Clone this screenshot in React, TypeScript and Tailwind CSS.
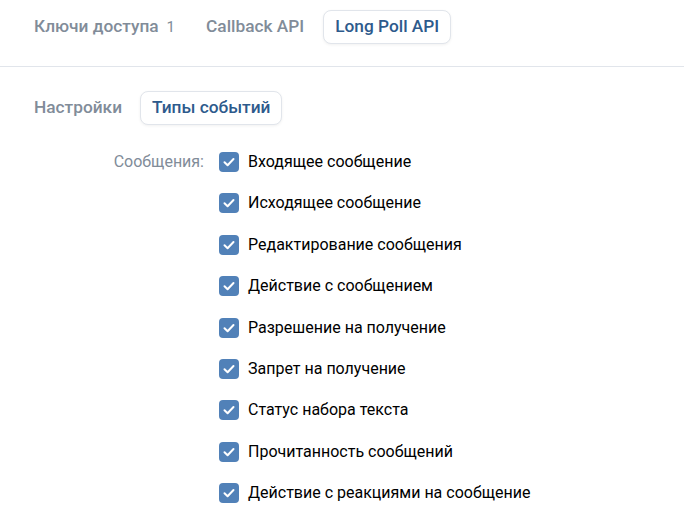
import React from "react";

const items = [
  "Входящее сообщение",
  "Исходящее сообщение",
  "Редактирование сообщения",
  "Действие с сообщением",
  "Разрешение на получение",
  "Запрет на получение",
  "Статус набора текста",
  "Прочитанность сообщений",
  "Действие с реакциями на сообщение",
];

function Check() {
  return (
    <div className="w-[20px] h-[20px] rounded-[4px] bg-[#5181b8] flex items-center justify-center shrink-0">
      <svg width="12" height="10" viewBox="0 0 12 10" fill="none">
        <path d="M1.5 5.2 L4.6 8.2 L10.5 2" stroke="white" strokeWidth="2" strokeLinecap="round" strokeLinejoin="round" />
      </svg>
    </div>
  );
}

export default function App() {
  return (
    <div className="w-[684px] h-[517px] bg-white overflow-hidden font-['Roboto',sans-serif]">
      <div className="flex items-center gap-[7px] pl-[22px] pt-[10px] pb-[22px] border-b border-[#e1e5eb]">
        <div className="h-[34px] px-3 flex items-center text-[17.3px] font-medium text-[#818c99]">
          Ключи доступа<span className="ml-2 text-[15px] font-normal text-[#818c99]">1</span>
        </div>
        <div className="h-[34px] px-3 flex items-center text-[17.3px] font-medium text-[#818c99]">Callback API</div>
        <div className="h-[34px] px-[11px] flex items-center text-[17.3px] font-medium text-[#2d5a8c] bg-white border border-[#e1e5eb] rounded-[8px] shadow-[0_1px_3px_rgba(0,0,0,0.06)]">
          Long Poll API
        </div>
      </div>
      <div className="flex items-center gap-[6px] pl-[22px] pt-[24px]">
        <div className="h-[34px] px-3 flex items-center text-[17.3px] font-medium text-[#818c99]">Настройки</div>
        <div className="h-[34px] px-[11px] flex items-center text-[17.3px] font-medium text-[#2d5a8c] bg-white border border-[#e1e5eb] rounded-[8px] shadow-[0_1px_3px_rgba(0,0,0,0.06)]">
          Типы событий
        </div>
      </div>
      <div className="flex pt-[27px]">
        <div className="w-[204px] text-right text-[16px] text-[#818c99] h-[20px] leading-[20px]">Сообщения:</div>
        <div className="flex flex-col gap-[21.4px] pl-[15px]">
          {items.map((t) => (
            <div key={t} className="flex items-center gap-[9px] h-[20px]">
              <Check />
              <span className="text-[16px] text-black leading-[20px]">{t}</span>
            </div>
          ))}
        </div>
      </div>
    </div>
  );
}
